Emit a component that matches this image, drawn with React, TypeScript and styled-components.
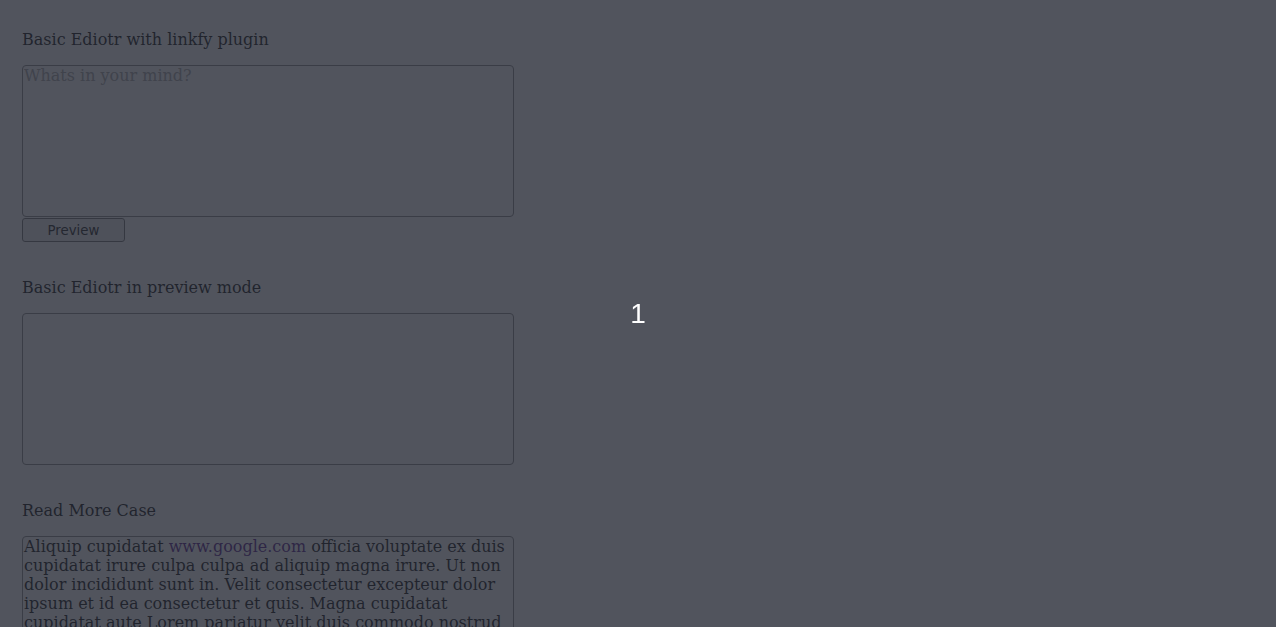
import React from 'react';
import styled, { createGlobalStyle } from 'styled-components';

const GlobalStyle = createGlobalStyle`
  html, body {
    margin: 0;
    padding: 0;
    background: #fff;
  }
  body {
    font-family: "DejaVu Serif", serif;
    font-size: 16px;
    color: #000;
  }
`;

const Page = styled.div`
  padding: 30px 22px 0;
  width: 492px;
  display: flex;
  flex-direction: column;
`;

const Section = styled.section`
  display: flex;
  flex-direction: column;
  margin-bottom: 36px;
`;

const Title = styled.div`
  line-height: 19px;
  margin-bottom: 16px;
  color: #111;
`;

const EditorBox = styled.textarea`
  display: block;
  box-sizing: border-box;
  width: 492px;
  height: 152px;
  margin: 0;
  padding: 0 1px;
  border: 1px solid #8a8a8a;
  border-radius: 4px;
  font-family: "DejaVu Serif", serif;
  font-size: 16px;
  line-height: 19px;
  resize: none;
  outline: none;
  background: #fff;

  &::placeholder {
    color: #a9a9a9;
  }
`;

const PreviewBox = styled.div<{ $fixed?: boolean }>`
  box-sizing: border-box;
  width: 492px;
  height: ${p => (p.$fixed ? '152px' : 'auto')};
  padding: 0 1px;
  border: 1px solid #8a8a8a;
  border-radius: 4px;
  line-height: 19px;
  color: #111;
`;

const Link = styled.a`
  color: #551a8b;
  text-decoration: none;
`;

const PreviewButton = styled.button`
  box-sizing: border-box;
  align-self: flex-start;
  width: 103px;
  height: 24px;
  margin-top: 1px;
  padding: 0;
  border: 1px solid #767676;
  border-radius: 3px;
  background: #efefef;
  color: #222;
  font-family: "DejaVu Sans", sans-serif;
  font-size: 13.33px;
`;

const Backdrop = styled.div`
  position: fixed;
  inset: 0;
  background: rgba(38, 41, 52, 0.8);
  display: flex;
  align-items: center;
  justify-content: center;
`;

const Counter = styled.div`
  color: #fff;
  font-family: "Liberation Sans", Arial, sans-serif;
  font-size: 28px;
  line-height: 1;
`;

const App: React.FC = () => {
  return (
    <>
      <GlobalStyle />
      <Page>
        <Section>
          <Title>Basic Ediotr with linkfy plugin</Title>
          <EditorBox placeholder="Whats in your mind?" />
          <PreviewButton>Preview</PreviewButton>
        </Section>

        <Section>
          <Title>Basic Ediotr in preview mode</Title>
          <PreviewBox $fixed />
        </Section>

        <Section>
          <Title>Read More Case</Title>
          <PreviewBox>
            Aliquip cupidatat <Link href="#">www.google.com</Link> officia voluptate ex duis cupidatat irure culpa
            culpa ad aliquip magna irure. Ut non dolor incididunt sunt in. Velit consectetur excepteur dolor ipsum et
            id ea consectetur et quis. Magna cupidatat cupidatat aute Lorem pariatur velit duis commodo nostrud
            laboris. Cillum ea proident id quis deserunt nulla consequat ullamco esse.
          </PreviewBox>
        </Section>
      </Page>

      {/* overlay */}
      <Backdrop>
        <Counter>1</Counter>
      </Backdrop>
    </>
  );
};

export default App;
